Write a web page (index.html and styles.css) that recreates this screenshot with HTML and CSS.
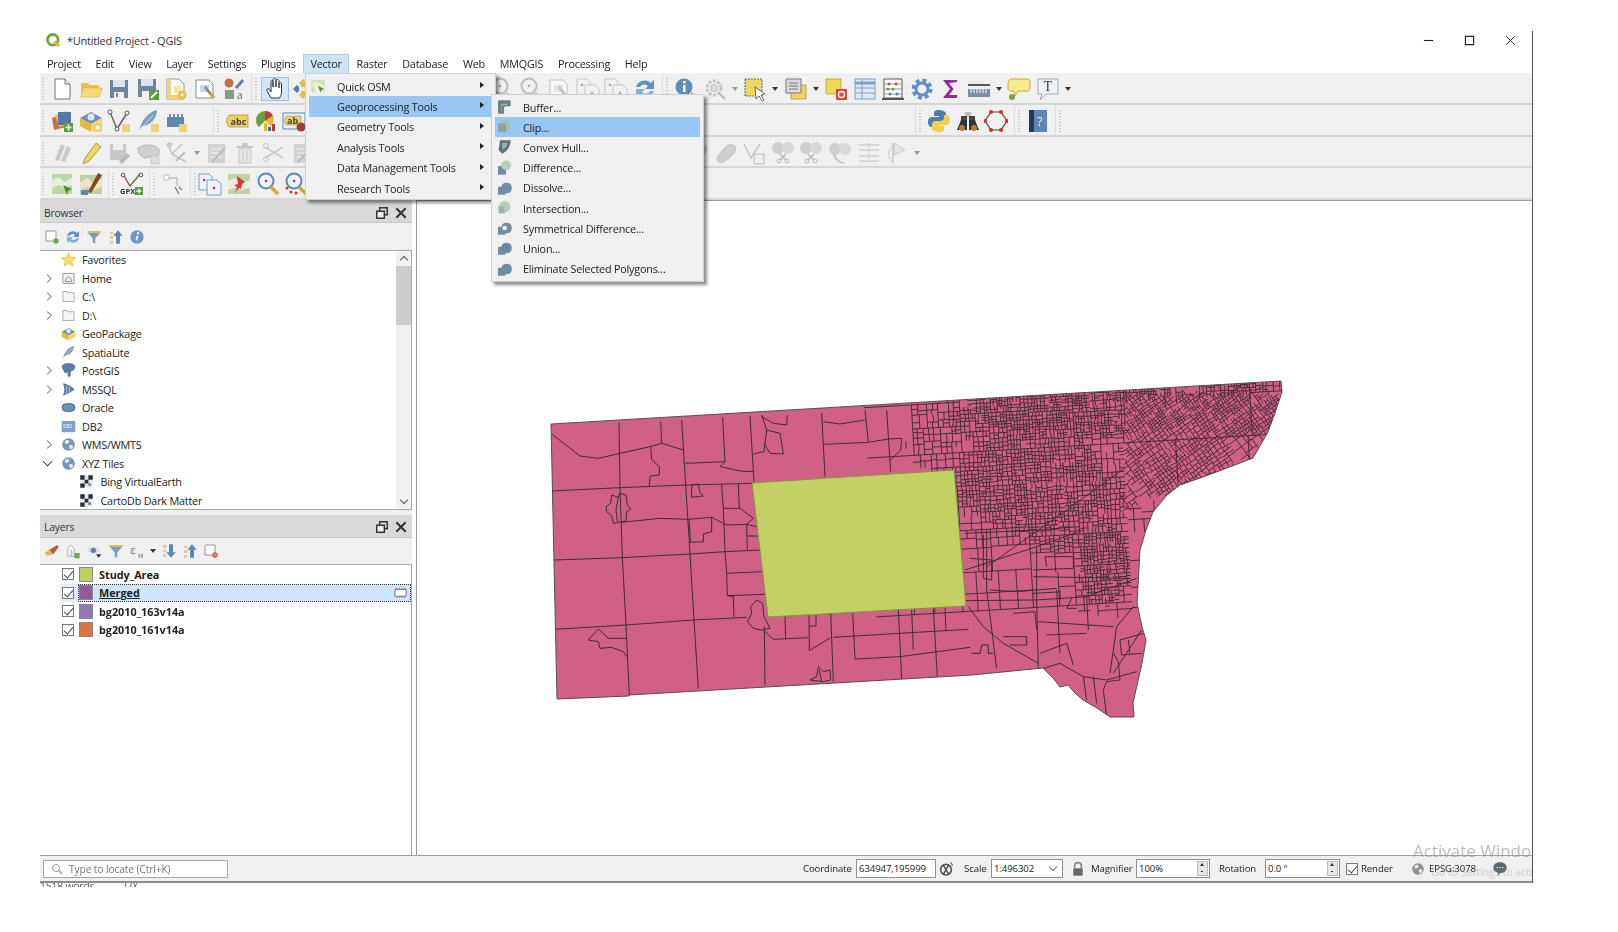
FILE: index.html
```html
<!DOCTYPE html>
<html lang="en">
<head>
    <meta charset="UTF-8">
    <title>*Untitled Project - QGIS</title>
    <link rel="stylesheet" href="styles.css">
</head>
<body>
    <!-- icon sheet -->
    <svg class="sheet" xmlns="http://www.w3.org/2000/svg">
        <symbol id="qgis" viewBox="0 0 24 24"><circle cx="11" cy="11" r="7.5" fill="none" stroke="#6ca53c" stroke-width="4"/><path d="M13 13l7 7" stroke="#e5b532" stroke-width="4"/></symbol>
        <symbol id="new" viewBox="0 0 24 24"><path d="M5 2h10l5 5v15H5z" fill="#fff" stroke="#777"/><path d="M15 2v5h5" fill="#eee" stroke="#777"/></symbol>
        <symbol id="open" viewBox="0 0 24 24"><path d="M2 20V6h7l2 2h9v12z" fill="#e9c04e"/><path d="M2 20l2-9h19l-3 9z" fill="#f8d978" stroke="#d9ae3e" stroke-width=".6"/></symbol>
        <symbol id="save" viewBox="0 0 24 24"><path d="M3 3h18v18H3z" fill="#6f859f"/><path d="M6 3h12v7H6z" fill="#dfe5ec"/><path d="M7 15h10v6H7z" fill="#f2f2f2"/><path d="M9 16h2v4H9z" fill="#6f859f"/></symbol>
        <symbol id="saveas" viewBox="0 0 24 24"><path d="M2 2h18v18H2z" fill="#6f859f"/><path d="M5 2h12v7H5z" fill="#dfe5ec"/><path d="M6 14h9v6H6z" fill="#f2f2f2"/><path d="M13 13h10v10H13z" fill="#5d9c3c"/><path d="M15 21l6-6" stroke="#fff" stroke-width="2"/></symbol>
        <symbol id="layout" viewBox="0 0 24 24"><path d="M3 2h12l5 5v15H3z" fill="#fff" stroke="#999"/><path d="M3 2h4v20H3zM3 18h17v4H3z" fill="#eed27a"/><path d="M10 9h7v7h-7z" fill="#f3e3a6"/><circle cx="18" cy="18" r="4.5" fill="#e8c14e"/><circle cx="18" cy="18" r="1.5" fill="#fff"/></symbol>
        <symbol id="layoutmgr" viewBox="0 0 24 24"><path d="M3 3h13l4 4v14H3z" fill="#fff" stroke="#888"/><path d="M7 8h9v7H7z" fill="#c7d8ea"/><path d="M11 11l8 10 2-2-8-10z" fill="#8a8a8a"/><path d="M16 17l4 5 2-2-3-4z" fill="#d8a534"/></symbol>
        <symbol id="style" viewBox="0 0 24 24"><circle cx="7" cy="6" r="4.5" fill="#c5703b"/><path d="M3 13h9v9H3z" fill="#83a27f"/><path d="M14 11l7-8" stroke="#5b7fa8" stroke-width="3"/><text x="15" y="22" class="svg-t" font-size="10" fill="#666">a</text></symbol>
        <symbol id="hand" viewBox="0 0 24 24"><path d="M8 21l-4-7c-1-2 1-3 2-2l2 3V5c0-2 2-2 2 0v5-7c0-2 3-2 3 0v7-6c0-2 3-2 3 0v7-4c0-2 2.500-2 2.500 0V15c0 3-1 4-2 6z" fill="#fff" stroke="#333"/></symbol>
        <symbol id="panmap" viewBox="0 0 24 24"><path d="M12 2l4 4-2 2v2h-4V8L8 6zM12 22l-4-4 2-2v-2h4v2l2 2z" fill="#e3bf3f"/><path d="M2 12l4-4 2 2v4l-2 2zM22 12l-4 4-2-2v-4l2-2z" fill="#4f7fb5"/></symbol>
        <symbol id="abc" viewBox="0 0 24 24"><path d="M4 6h19v12H4l-3-6z" fill="#edcf62" stroke="#a8914a" stroke-width=".7"/><text x="5.500" y="15.500" class="svg-t" font-size="9" font-weight="700" fill="#444">abc</text></symbol>
        <symbol id="pie" viewBox="0 0 24 24"><path d="M12 2a9 9 0 0 1 8 5l-8 5z" fill="#cb3a32"/><path d="M12 12V2a9 9 0 0 0-9 9c0 3 1 5 3 7z" fill="#6ea03c"/><path d="M12 12l8-5a9 9 0 0 1-2 10z" fill="#e5b737"/><path d="M11 14h3v8h-3z" fill="#e5b737"/><path d="M15 18h3v4h-3z" fill="#2f6fae"/><path d="M19 15h3v7h-3z" fill="#b8392f"/></symbol>
        <symbol id="labelbox" viewBox="0 0 24 24"><path d="M1 4h22v16H1z" fill="#eef4fb" stroke="#4b86c9"/><path d="M4 7h15v9H4l-2-4z" fill="#edcf62" stroke="#a8914a" stroke-width=".6"/><text x="5" y="15" class="svg-t" font-size="9" font-weight="700" fill="#444">ab</text><circle cx="19" cy="18" r="4.500" fill="#a23d3a"/></symbol>
        <symbol id="identify" viewBox="0 0 24 24"><circle cx="10" cy="10" r="8.500" fill="#5f8dbd"/><path d="M9 8h2.500v7H9zM9 4h2.500v2.500H9z" fill="#fff"/><path d="M14 14l9 5-4 1-1 4z" fill="#fff" stroke="#333" stroke-width=".6"/></symbol>
        <symbol id="gearoff" viewBox="0 0 24 24"><circle cx="11" cy="11" r="7" fill="none" stroke="#c3c3c3" stroke-width="3" stroke-dasharray="3 1.500"/><circle cx="11" cy="11" r="3.500" fill="#ddd" stroke="#bbb"/><path d="M16 16l6 6" stroke="#bbb" stroke-width="2"/></symbol>
        <symbol id="selectf" viewBox="0 0 24 24"><path d="M2 2h17v17H2z" fill="#efd664" stroke="#666" stroke-dasharray="2 1"/><path d="M12 10l10 7-4 1 3 5-2 1-3-5-3 3z" fill="#fff" stroke="#444" stroke-width=".8"/></symbol>
        <symbol id="selectt" viewBox="0 0 24 24"><path d="M7 8h15v14H7z" fill="#efd664" stroke="#a9953f" stroke-width=".8"/><path d="M2 2h15v14H2z" fill="#dcdcdc" stroke="#777"/><path d="M5 6h9M5 9h9M5 12h9" stroke="#777"/></symbol>
        <symbol id="deselect" viewBox="0 0 24 24"><path d="M2 2h15v15H2z" fill="#f0d758" stroke="#b59f3b" stroke-width=".8"/><path d="M12 12h11v11H12z" fill="#d54a3c"/><circle cx="17.500" cy="17.500" r="3" fill="none" stroke="#fff" stroke-width="1.300"/></symbol>
        <symbol id="table" viewBox="0 0 24 24"><path d="M2 2h20v20H2z" fill="#dfe9f5" stroke="#7e9fc4"/><path d="M2 6h20" stroke="#7e9fc4" stroke-width="3"/><path d="M9 3v19M2 11h20M2 16h20" stroke="#7e9fc4"/></symbol>
        <symbol id="abacus" viewBox="0 0 24 24"><path d="M3 2h18v19H3z" fill="#fff" stroke="#555"/><path d="M1 21h22v2H1z" fill="#555"/><path d="M3 7h18M3 12h18M3 17h18" stroke="#999"/><circle cx="8" cy="7" r="1.500" fill="#cc4a3d"/><circle cx="15" cy="7" r="1.500" fill="#cc4a3d"/><circle cx="7" cy="12" r="1.500" fill="#5d9c3c"/><circle cx="12" cy="12" r="1.500" fill="#5d9c3c"/><circle cx="9" cy="17" r="1.500" fill="#4f7fb5"/><circle cx="16" cy="17" r="1.500" fill="#4f7fb5"/></symbol>
        <symbol id="gearblue" viewBox="0 0 24 24"><circle cx="12" cy="12" r="8" fill="none" stroke="#5f8fc7" stroke-width="5" stroke-dasharray="3.600 2.700"/><circle cx="12" cy="12" r="6" fill="none" stroke="#5f8fc7" stroke-width="3"/></symbol>
        <symbol id="sigma" viewBox="0 0 24 24"><path d="M19 5V3H5l7 9-7 9h14v-3H11l4.500-6-4.500-6z" fill="#93279b"/></symbol>
        <symbol id="ruler" viewBox="0 0 24 24"><path d="M1 7h22v2H1z" fill="#555"/><path d="M1 12h22v8H1z" fill="#7f8fa3"/><path d="M4 12v4M7 12v4M10 12v4M13 12v4M16 12v4M19 12v4" stroke="#fff"/></symbol>
        <symbol id="tip" viewBox="0 0 24 24"><path d="M5 2h15c3 0 3 2 3 4v5c0 3-2 3-3 3H11l-3 5-1-5H5c-3 0-4-1-4-3V6c0-3 2-4 4-4z" fill="#f9ea8c" stroke="#c9a83b"/><circle cx="5" cy="20" r="3" fill="#7ca24f"/></symbol>
        <symbol id="tann" viewBox="0 0 24 24"><path d="M2 2h20v15H10l-6 6 2-6H2z" fill="#eef2f6" stroke="#a5adb7"/><text x="7.500" y="14" class="svg-t svg-serif" font-size="14" fill="#444">T</text></symbol>
        <symbol id="python" viewBox="0 0 24 24"><path d="M12 1c-5 0-5 2-5 4v2h5v1H5c-3 0-4 3-4 5s1 5 3 5h3v-3c0-2 2-3 4-3h5c2 0 3-2 3-3V5c0-2-3-4-7-4z" fill="#4a7eb0"/><path d="M12 23c5 0 5-2 5-4v-2h-5v-1h7c3 0 4-3 4-5s-1-5-3-5h-3v3c0 2-2 3-4 3H8c-2 0-3 2-3 3v5c0 2 3 3 7 3z" fill="#f3cf4f"/></symbol>
        <symbol id="binoc" viewBox="0 0 24 24"><path d="M9 3h6v5H9z" fill="#bbb"/><path d="M5 7h6v6H5zM13 7h6v6h-6z" fill="#444"/><path d="M1 21l4-10h6v10zM23 21l-4-10h-6v10z" fill="#333"/><circle cx="6" cy="19" r="3" fill="#c07a35"/><circle cx="18" cy="19" r="3" fill="#c07a35"/></symbol>
        <symbol id="hexa" viewBox="0 0 24 24"><path d="M7 3h10l6 9-6 9H7L1 12z" fill="none" stroke="#444" stroke-width="1.200"/><g fill="#e02b20"><circle cx="7" cy="3" r="2"/><circle cx="17" cy="3" r="2"/><circle cx="23" cy="12" r="2"/><circle cx="17" cy="21" r="2"/><circle cx="7" cy="21" r="2"/><circle cx="1" cy="12" r="2"/></g></symbol>
        <symbol id="helpbook" viewBox="0 0 24 24"><path d="M3 1h18v22H3z" fill="#5f85b5"/><path d="M3 1h5v22H3z" fill="#243a56"/><text x="11" y="17" class="svg-t" font-size="13" fill="#e8eef6">?</text></symbol>
        <symbol id="addlayers" viewBox="0 0 24 24"><path d="M2 9l12-4 2 13-12 3z" fill="#c8713c"/><path d="M5 6l12-4 3 13-11 3z" fill="#efc14e"/><path d="M8 3h13v13H8z" fill="#4f79ad"/><path d="M14 14h9v9h-9z" fill="#5d9c3c"/><path d="M18.500 15.500v6M15.500 18.500h6" stroke="#fff" stroke-width="1.600"/></symbol>
        <symbol id="gpkg" viewBox="0 0 24 24"><path d="M1 9l11-6 11 6-11 6z" fill="#6f8fb3"/><circle cx="12" cy="8" r="3.500" fill="#dfe8f2"/><path d="M1 9l11 6v8L1 17z" fill="#e4b93e"/><path d="M23 9l-11 6v8l11-6z" fill="#f5d66f"/></symbol>
        <symbol id="gpkgadd" viewBox="0 0 24 24"><use href="#gpkg"/><path d="M14 14h9v9h-9z" fill="#eed27a"/><circle cx="18.500" cy="18.500" r="2" fill="#fff"/></symbol>
        <symbol id="vect" viewBox="0 0 24 24"><path d="M3 3l7 17L20 4" fill="none" stroke="#666" stroke-width="1.500"/><circle cx="3" cy="3" r="2" fill="#fff" stroke="#555"/><circle cx="10" cy="20" r="2" fill="#fff" stroke="#555"/><circle cx="20" cy="4" r="2" fill="#fff" stroke="#555"/><path d="M15 15h8v8h-8z" fill="#eed27a"/></symbol>
        <symbol id="feather" viewBox="0 0 24 24"><path d="M3 22C5 12 12 3 21 1c0 7-5 13-10 15-3 1-5 1-6 2z" fill="#7f9dbf"/><path d="M3 22L17 6" stroke="#eef" stroke-width=".7"/></symbol>
        <symbol id="featheradd" viewBox="0 0 24 24"><use href="#feather"/><path d="M15 15h8v8h-8z" fill="#eed27a"/></symbol>
        <symbol id="chip" viewBox="0 0 24 24"><path d="M3 8h17v10H3z" fill="#5f86b5"/><path d="M6 5v3M10 5v3M14 5v3M18 5v3" stroke="#5f6f82" stroke-width="1.500"/><path d="M15 15h8v8h-8z" fill="#eed27a"/></symbol>
        <symbol id="memchip" viewBox="0 0 24 24"><path d="M3 7h18v11H3z" fill="#fff" stroke="#667" stroke-width="1.500"/><path d="M6 4v3M10 4v3M14 4v3M18 4v3M6 18v3M10 18v3M14 18v3M18 18v3" stroke="#667"/></symbol>
        <symbol id="pens" viewBox="0 0 24 24"><path d="M5 19L11 3l4 2-6 15zM11 20l6-15 4 2-6 14z" fill="#c9c9c9"/></symbol>
        <symbol id="pencil" viewBox="0 0 24 24"><path d="M6 17L17 2l5 4L10 20l-6 3z" fill="#f0d45c" stroke="#8d7a2a" stroke-width=".7"/></symbol>
        <symbol id="saveoff" viewBox="0 0 24 24"><path d="M3 3h16v16H3z" fill="#c8c8c8"/><path d="M6 3h10v6H6z" fill="#eee"/><path d="M12 20l8-8 3 3-8 8z" fill="#bbb"/></symbol>
        <symbol id="polyoff" viewBox="0 0 24 24"><path d="M2 7c4-4 16-4 20 0s0 9-4 9-5 0-8 1-9-5-8-10z" fill="#cfcfcf" stroke="#bbb"/><path d="M15 15h8v8h-8z" fill="#ddd" stroke="#bbb" stroke-width=".6"/></symbol>
        <symbol id="vertexoff" viewBox="0 0 24 24"><path d="M4 3h5M4 3l4 10 10-10M8 13l14 8" fill="none" stroke="#c5c5c5" stroke-width="1.500"/><circle cx="5" cy="4" r="2" fill="none" stroke="#bbb"/><path d="M12 20l9-9" stroke="#bbb" stroke-width="2"/></symbol>
        <symbol id="formoff" viewBox="0 0 24 24"><path d="M3 3h17v19H3z" fill="#d2d2d2"/><path d="M6 8h11M6 12h11M6 16h11" stroke="#f2f2f2"/><path d="M7 21l13-14" stroke="#bbb" stroke-width="2"/></symbol>
        <symbol id="trashoff" viewBox="0 0 24 24"><path d="M4 5h16v2H4zM9 2h6v3H9z" fill="#c6c6c6"/><path d="M6 8h12v14H6z" fill="#e7e7e7" stroke="#c6c6c6"/><path d="M10 10v10M14 10v10" stroke="#c6c6c6"/></symbol>
        <symbol id="scissoff" viewBox="0 0 24 24"><path d="M3 6l18 11M3 17L21 6" stroke="#cacaca" stroke-width="1.800"/><circle cx="4" cy="5" r="2.500" fill="none" stroke="#c5c5c5"/><circle cx="4" cy="18" r="2.500" fill="none" stroke="#c5c5c5"/></symbol>
        <symbol id="blobsoff" viewBox="0 0 24 24"><path d="M3 18c0-4 3-5 6-9s6-6 10-5 3 6 0 9-5 5-8 7-8 2-8-2z" fill="#cfcfcf" stroke="#bbb"/></symbol>
        <symbol id="vboxoff" viewBox="0 0 24 24"><path d="M2 3l7 14L18 3" fill="none" stroke="#c8c8c8" stroke-width="1.500"/><path d="M12 13h10v10H12z" fill="#eee" stroke="#bbb"/></symbol>
        <symbol id="splitoff" viewBox="0 0 24 24"><circle cx="7" cy="7" r="6" fill="#cfcfcf"/><circle cx="17" cy="7" r="6" fill="#d8d8d8"/><path d="M9 13l6 6M15 13l-6 6" stroke="#bbb" stroke-width="1.600"/><circle cx="8" cy="20" r="2" fill="none" stroke="#bbb"/><circle cx="16" cy="20" r="2" fill="none" stroke="#bbb"/></symbol>
        <symbol id="reshapeoff" viewBox="0 0 24 24"><circle cx="7" cy="8" r="6" fill="#cfcfcf"/><circle cx="17" cy="8" r="6" fill="#d8d8d8"/><path d="M6 13c1 6 7 9 10 9" fill="none" stroke="#bbb" stroke-width="1.500"/></symbol>
        <symbol id="offsetoff" viewBox="0 0 24 24"><path d="M2 4h20M2 9h20M2 15h20M2 20h20" stroke="#d0d0d0" stroke-width="1.500"/><path d="M12 2v20" stroke="#c0c0c0" stroke-dasharray="2 1.500"/></symbol>
        <symbol id="rotateoff" viewBox="0 0 24 24"><path d="M8 2v20" stroke="#c8c8c8" stroke-width="1.500"/><path d="M9 2l11 7-11 5z" fill="#e6e6e6" stroke="#c8c8c8"/><path d="M8 4C3 8 2 17 7 21" fill="none" stroke="#c8c8c8"/></symbol>
        <symbol id="mapgreen" viewBox="0 0 24 24"><path d="M2 2h20v20H2z" fill="#bcd6a6"/><path d="M2 8l7-3 6 5 7-4v7l-8 3-5-3-7 3z" fill="#e8efdc"/><path d="M13 13l9 4-4 2-1 4z" fill="#4f8a30"/></symbol>
        <symbol id="mappen" viewBox="0 0 24 24"><path d="M1 3h22v19H1z" fill="#b9d3a0"/><path d="M1 10l8-4 5 5 9-4v8l-9 3-5-3-8 3z" fill="#f0e2c5"/><path d="M9 20L19 1l4 2-11 18z" fill="#7a4a2a"/><path d="M2 18h7v5H2z" fill="#5f86b5"/></symbol>
        <symbol id="gpx" viewBox="0 0 24 24"><path d="M3 2l7 12L20 2" fill="none" stroke="#a34a3e" stroke-width="1.300"/><path d="M10 14L20 2" stroke="#5d9c3c" stroke-width="1.300"/><circle cx="3" cy="3" r="1.800" fill="#fff" stroke="#555"/><circle cx="21" cy="3" r="1.800" fill="#fff" stroke="#555"/><text x="0" y="22" class="svg-t" font-size="7.500" font-weight="700" fill="#333">GPX</text><path d="M15 15h8v8h-8z" fill="#5d9c3c"/><path d="M19 16.500v5M16.500 19h5" stroke="#fff" stroke-width="1.300"/></symbol>
        <symbol id="cornersel" viewBox="0 0 24 24"><path d="M3 6h13v8" fill="none" stroke="#bdbdbd" stroke-width="1.300"/><path d="M3 3h5v5H3z" fill="#fff" stroke="#bbb"/><path d="M14 15l4 7M18 15l3 3" stroke="#777" stroke-width="1.200"/></symbol>
        <symbol id="docpins" viewBox="0 0 24 24"><path d="M1 2h10l3 3v13H1z" fill="#eef3f9" stroke="#7d9bbd"/><path d="M9 8h10l4 4v11H9z" fill="#eef3f9" stroke="#7d9bbd"/><circle cx="6" cy="8" r="1.300" fill="#d33"/><circle cx="16" cy="16" r="1.300" fill="#d33"/></symbol>
        <symbol id="mappin" viewBox="0 0 24 24"><path d="M1 2h22v20H1z" fill="#bcd6a6"/><path d="M1 9l7-3 7 5 8-3v8l-9 2-5-3-8 3z" fill="#eef0dc"/><path d="M10 4l8 6-3 2-1 5-2-1-4 5 2-6-3-2 4-1z" fill="#d43a2f"/></symbol>
        <symbol id="zoomone" viewBox="0 0 24 24"><circle cx="10" cy="9" r="7.500" fill="#eaf2fa" stroke="#5f86b5" stroke-width="2"/><circle cx="10" cy="9" r="1.300" fill="#d33"/><path d="M15 15l7 7" stroke="#d7a53b" stroke-width="3.500"/></symbol>
        <symbol id="zoommany" viewBox="0 0 24 24"><use href="#zoomone"/><circle cx="7" cy="20" r="1.500" fill="#d33"/><circle cx="3" cy="16" r="1.500" fill="#d33"/><circle cx="12" cy="21" r="1.500" fill="#d33"/></symbol>
        <symbol id="m-osm" viewBox="0 0 24 24"><path d="M2 3h20v18H2z" fill="#cfe0bd"/><path d="M2 8l8-3 12 7-5 9H9z" fill="#e9efdd"/><path d="M12 12l9 4-4 2-1 4z" fill="#5a8a3a"/></symbol>
        <symbol id="m-buffer" viewBox="0 0 24 24"><path d="M3 4c0-1 1-2 2-2h15c1 0 2 1 2 2v7h-7c-2 0-3 1-3 3v8H5c-1 0-2-1-2-2z" fill="#6e7f82"/><path d="M8 7h9v2h-5c-2 0-3 1-3 3v7H8z" fill="#a3b1b3"/></symbol>
        <symbol id="m-clip" viewBox="0 0 24 24"><circle cx="13" cy="10" r="8" fill="#a9bfa8" stroke="#8fa78f" stroke-dasharray="2 1.500"/><path d="M3 7h12v13H3z" fill="#7f9bab" opacity=".8"/></symbol>
        <symbol id="m-hull" viewBox="0 0 24 24"><path d="M6 2h16c0 8-5 17-13 20L4 16z" fill="#5f7377"/><path d="M9 6h8c0 4-3 8-7 10z" fill="#9fb1b4"/></symbol>
        <symbol id="m-diff" viewBox="0 0 24 24"><path d="M3 9h12v13H3z" fill="#6f8ea5"/><circle cx="15" cy="8" r="7" fill="#b9ccb8" stroke="#a3bba3" stroke-dasharray="2 1.500"/></symbol>
        <symbol id="m-dissolve" viewBox="0 0 24 24"><path d="M3 10h5a8 8 0 1 1 9 10h-3v2H3z" fill="#6f8ea5"/></symbol>
        <symbol id="m-inter" viewBox="0 0 24 24"><circle cx="13" cy="10" r="8" fill="#b9ccb8" stroke="#a3bba3" stroke-dasharray="2 1.500"/><path d="M4 9h9v11H4z" fill="#9db4b4" stroke="#b9ccb8" stroke-dasharray="1.500 1"/></symbol>
        <symbol id="m-sym" viewBox="0 0 24 24"><path d="M3 10h5a8 8 0 1 1 9 10h-3v2H3z" fill="#6f8ea5"/><circle cx="13" cy="12" r="3.500" fill="#e8eef2"/></symbol>
        <symbol id="m-union" viewBox="0 0 24 24"><path d="M3 10h5a8 8 0 1 1 9 10h-3v2H3z" fill="#6f8ea5"/><circle cx="13" cy="12" r="4" fill="none" stroke="#4d6b80"/></symbol>
        <symbol id="star" viewBox="0 0 24 24"><path d="M12 1l3.300 7.500 8 .8-6 5.400 1.800 8L12 18.500 4.900 22.700l1.800-8-6-5.400 8-.8z" fill="#f6df62" stroke="#c9a83b" stroke-width=".8"/></symbol>
        <symbol id="homef" viewBox="0 0 24 24"><path d="M3 4h18v16H3z" fill="#f3f3f3" stroke="#888" stroke-width="1.300"/><path d="M7 13l5-4 5 4v4H7z" fill="none" stroke="#777" stroke-width="1.300"/></symbol>
        <symbol id="folder" viewBox="0 0 24 24"><path d="M3 4h7l1 2h10v14H3z" fill="#f5f5f5" stroke="#999" stroke-width="1.200"/></symbol>
        <symbol id="pg" viewBox="0 0 24 24"><path d="M3 3c3-3 15-3 18 0s0 8-2 9-3 1-4 1v7c0 2-4 2-4 0v-7c-2 4-5 3-6 1s0-2-1-3-4-5-1-8z" fill="#5f7ea5" stroke="#3f5a7c" stroke-width=".7"/></symbol>
        <symbol id="mssql" viewBox="0 0 24 24"><path d="M3 2c7 1 14 5 19 10-5 4-12 8-19 10 3-7 3-13 0-20z" fill="#5f7ea5"/><path d="M8 6c2 4 2 9 0 13M13 8c1 3 1 6 0 9" stroke="#dfe7f0" fill="none"/></symbol>
        <symbol id="oracle" viewBox="0 0 24 24"><rect x="2" y="6" width="20" height="12" rx="6" fill="#6f8fbb" stroke="#3f5a7c" stroke-width="1.500"/></symbol>
        <symbol id="db2" viewBox="0 0 24 24"><rect x="1" y="3" width="22" height="18" rx="2" fill="#7d9fcb"/><text x="3" y="15" class="svg-t" font-size="7.500" fill="#fff">DB2</text></symbol>
        <symbol id="globe" viewBox="0 0 24 24"><circle cx="12" cy="12" r="10" fill="#7795b5"/><path d="M7 6c3-2 5-1 6 1s-2 3-4 4-4-3-2-5zM14 13c3-1 6 0 5 3s-3 4-4 3-3-5-1-6z" fill="#e9eef3"/></symbol>
        <symbol id="tiles" viewBox="0 0 24 24"><path d="M2 2h20v20H2z" fill="#e8e8e8"/><path d="M2 2h7v7H2zM15 2h7v7h-7zM9 9h6v6H9zM2 15h7v7H2z" fill="#25303c"/><path d="M15 15h4v4h-4z" fill="#6d7c8c"/></symbol>
        <symbol id="addsel" viewBox="0 0 24 24"><path d="M3 3h15v15H3z" fill="#fff" stroke="#888" stroke-width="1.300"/><circle cx="18" cy="18" r="4" fill="#6aa84a"/></symbol>
        <symbol id="refresh" viewBox="0 0 24 24"><path d="M3 10a9 9 0 0 1 15-4l3-3v9h-9l3-3a5 5 0 0 0-8 1z" fill="#5d91c8"/><path d="M21 14a9 9 0 0 1-15 4l-3 3v-9h9l-3 3a5 5 0 0 0 8-1z" fill="#7fb0de"/></symbol>
        <symbol id="filter" viewBox="0 0 24 24"><path d="M2 3h20v3H2z" fill="#e0c04f"/><path d="M3 6h18l-7 8v8l-4-2v-6z" fill="#7c9cc2"/></symbol>
        <symbol id="collapse" viewBox="0 0 24 24"><path d="M3 4h5v4H3zM3 11h5v4H3zM3 18h5v4H3z" fill="#e3c9a0"/><path d="M15 2l7 8h-4v12h-6V10H8z" fill="#5f86b5"/></symbol>
        <symbol id="expand" viewBox="0 0 24 24"><path d="M3 3h5v4H3zM3 10h5v4H3zM3 17h5v4H3z" fill="#e3c9a0"/><path d="M15 22l7-8h-4V2h-6v12H8z" fill="#5f86b5"/></symbol>
        <symbol id="info" viewBox="0 0 24 24"><circle cx="12" cy="12" r="10" fill="#6f97c9"/><path d="M11 10h3l-1.500 7H10zM12 5h3v3h-3z" fill="#fff"/></symbol>
        <symbol id="brush" viewBox="0 0 24 24"><path d="M1 15l7-5 6 7-9 2z" fill="#e6b54a"/><path d="M8 10l12-7 2 3-8 11z" fill="#c0563f"/></symbol>
        <symbol id="addgroup" viewBox="0 0 24 24"><path d="M4 20V8l5-5 5 5v12z" fill="#f4f4f4" stroke="#999"/><path d="M8 20V10h3v10z" fill="#ccc"/><path d="M14 15h8v8h-8z" fill="#6aa84a"/></symbol>
        <symbol id="eye" viewBox="0 0 24 24"><path d="M1 11c5-7 15-7 20 0-5 7-15 7-20 0z" fill="#ddd"/><circle cx="11" cy="11" r="4" fill="#5f7ea5"/><path d="M15 17h8l-4 5z" fill="#333"/></symbol>
        <symbol id="epsi" viewBox="0 0 24 24"><text x="2" y="16" class="svg-t" font-size="17" fill="#777">ε</text><path d="M14 16h3v6h-3zM18 16h3v6h-3z" fill="#aaa"/></symbol>
        <symbol id="removesel" viewBox="0 0 24 24"><path d="M3 3h15v15H3z" fill="#fff" stroke="#888" stroke-width="1.300"/><circle cx="18" cy="18" r="4" fill="#d9534f"/><path d="M16 18h4" stroke="#fff"/></symbol>
        <symbol id="float" viewBox="0 0 24 24"><path d="M8 3h13v12H8z" fill="none" stroke="#333" stroke-width="2.500"/><path d="M3 9h13v12H3z" fill="#f0f0f0" stroke="#333" stroke-width="2.500"/></symbol>
        <symbol id="close" viewBox="0 0 24 24"><path d="M4 4l16 16M20 4L4 20" stroke="#333" stroke-width="3.500"/></symbol>
        <symbol id="search" viewBox="0 0 24 24"><circle cx="10" cy="10" r="7" fill="none" stroke="#999" stroke-width="2"/><path d="M15 15l7 7" stroke="#999" stroke-width="2.500"/></symbol>
        <symbol id="crs" viewBox="0 0 24 24"><circle cx="12" cy="13" r="8" fill="none" stroke="#555" stroke-width="2.500"/><path d="M8 6l8 14M16 6L8 20" stroke="#444" stroke-width="2"/><path d="M19 2l3 5" stroke="#777" stroke-width="2"/></symbol>
        <symbol id="lock" viewBox="0 0 24 24"><path d="M7 11V7c0-6 10-6 10 0v4" fill="none" stroke="#888" stroke-width="2.500"/><path d="M5 11h14v11H5z" fill="#666"/></symbol>
        <symbol id="msg" viewBox="0 0 24 24"><path d="M12 2c6 0 10 3 10 8s-4 8-10 8l-2 4-2-5c-4-1-6-4-6-7 0-5 4-8 10-8z" fill="#5a6b70"/><path d="M7 10h2M11 10h2M15 10h2" stroke="#fff" stroke-width="1.500"/></symbol>
    </svg>

    <div class="window">
        <div class="titlebar">
            <svg class="title-icon"><use href="#qgis"/></svg>
            <span class="title-text">*Untitled Project - QGIS</span>
            <div class="win-controls">
                <span class="win-btn"><svg viewBox="0 0 12 12"><path d="M1 6h10" stroke="#222" stroke-width="1.200"/></svg></span>
                <span class="win-btn"><svg viewBox="0 0 12 12"><path d="M1.500 1.500h9v9h-9z" fill="none" stroke="#222" stroke-width="1.200"/></svg></span>
                <span class="win-btn"><svg viewBox="0 0 12 12"><path d="M1.500 1.500l9 9M10.500 1.500l-9 9" stroke="#222"/></svg></span>
            </div>
        </div>

        <div class="menubar">
            <span class="menu-item">Project</span>
            <span class="menu-item">Edit</span>
            <span class="menu-item">View</span>
            <span class="menu-item">Layer</span>
            <span class="menu-item">Settings</span>
            <span class="menu-item">Plugins</span>
            <span class="menu-item active">Vector</span>
            <span class="menu-item">Raster</span>
            <span class="menu-item">Database</span>
            <span class="menu-item">Web</span>
            <span class="menu-item">MMQGIS</span>
            <span class="menu-item">Processing</span>
            <span class="menu-item">Help</span>
        </div>

        <div class="toolbar">
            <span class="grip first"></span>
            <svg class="ic"><use href="#new"/></svg>
            <svg class="ic"><use href="#open"/></svg>
            <svg class="ic"><use href="#save"/></svg>
            <svg class="ic"><use href="#saveas"/></svg>
            <svg class="ic"><use href="#layout"/></svg>
            <svg class="ic"><use href="#layoutmgr"/></svg>
            <svg class="ic"><use href="#style"/></svg>
            <span class="sep"></span><span class="grip"></span>
            <span class="ic-on"><svg class="ic"><use href="#hand"/></svg></span>
            <svg class="ic"><use href="#panmap"/></svg>
            <span class="gap gap-r1"></span>
            <svg class="ic off"><use href="#zoomone"/></svg>
            <svg class="ic off"><use href="#zoomone"/></svg>
            <svg class="ic off"><use href="#layoutmgr"/></svg>
            <svg class="ic off"><use href="#docpins"/></svg>
            <svg class="ic off"><use href="#docpins"/></svg>
            <svg class="ic"><use href="#refresh"/></svg>
            <span class="sep"></span><span class="grip"></span>
            <svg class="ic"><use href="#identify"/></svg>
            <svg class="ic"><use href="#gearoff"/></svg><span class="drop off"></span>
            <svg class="ic"><use href="#selectf"/></svg><span class="drop"></span>
            <svg class="ic"><use href="#selectt"/></svg><span class="drop"></span>
            <svg class="ic"><use href="#deselect"/></svg>
            <svg class="ic"><use href="#table"/></svg>
            <svg class="ic"><use href="#abacus"/></svg>
            <svg class="ic"><use href="#gearblue"/></svg>
            <svg class="ic"><use href="#sigma"/></svg>
            <svg class="ic"><use href="#ruler"/></svg><span class="drop"></span>
            <svg class="ic"><use href="#tip"/></svg>
            <svg class="ic"><use href="#tann"/></svg><span class="drop"></span>
        </div>

        <div class="toolbar">
            <span class="grip first"></span>
            <svg class="ic"><use href="#addlayers"/></svg>
            <svg class="ic"><use href="#gpkgadd"/></svg>
            <svg class="ic"><use href="#vect"/></svg>
            <svg class="ic"><use href="#featheradd"/></svg>
            <svg class="ic"><use href="#chip"/></svg>
            <span class="gap gap-r2a"></span>
            <span class="sep"></span><span class="grip"></span>
            <svg class="ic"><use href="#abc"/></svg>
            <svg class="ic"><use href="#pie"/></svg>
            <svg class="ic"><use href="#labelbox"/></svg>
            <span class="gap gap-r2b"></span>
            <span class="sep"></span><span class="grip"></span>
            <svg class="ic"><use href="#python"/></svg>
            <svg class="ic"><use href="#binoc"/></svg>
            <svg class="ic"><use href="#hexa"/></svg>
            <span class="sep"></span><span class="grip"></span>
            <svg class="ic"><use href="#helpbook"/></svg>
            <span class="sep"></span><span class="grip"></span>
        </div>

        <div class="toolbar short">
            <span class="grip first"></span>
            <svg class="ic"><use href="#pens"/></svg>
            <svg class="ic"><use href="#pencil"/></svg>
            <svg class="ic"><use href="#saveoff"/></svg>
            <svg class="ic"><use href="#polyoff"/></svg>
            <svg class="ic"><use href="#vertexoff"/></svg><span class="drop off"></span>
            <svg class="ic"><use href="#formoff"/></svg>
            <svg class="ic"><use href="#trashoff"/></svg>
            <svg class="ic"><use href="#scissoff"/></svg>
            <svg class="ic"><use href="#formoff"/></svg>
            <span class="gap gap-r3"></span>
            <svg class="ic"><use href="#blobsoff"/></svg>
            <svg class="ic"><use href="#blobsoff"/></svg>
            <svg class="ic"><use href="#vboxoff"/></svg>
            <svg class="ic"><use href="#splitoff"/></svg>
            <svg class="ic"><use href="#splitoff"/></svg>
            <svg class="ic"><use href="#reshapeoff"/></svg>
            <svg class="ic"><use href="#offsetoff"/></svg>
            <svg class="ic"><use href="#rotateoff"/></svg><span class="drop off"></span>
        </div>

        <div class="toolbar">
            <span class="grip first"></span>
            <svg class="ic"><use href="#mapgreen"/></svg>
            <svg class="ic"><use href="#mappen"/></svg>
            <span class="sep"></span><span class="grip"></span>
            <svg class="ic"><use href="#gpx"/></svg>
            <span class="sep"></span><span class="grip"></span>
            <svg class="ic"><use href="#cornersel"/></svg>
            <span class="sep"></span><span class="grip tight"></span>
            <svg class="ic"><use href="#docpins"/></svg>
            <svg class="ic"><use href="#mappin"/></svg>
            <svg class="ic"><use href="#zoomone"/></svg>
            <svg class="ic"><use href="#zoommany"/></svg>
        </div>

        <div class="main">
            <div class="docks">
                <section class="dock browser">
                    <div class="dock-title">
                        <span>Browser</span>
                        <svg class="dock-btn"><use href="#float"/></svg>
                        <svg class="dock-btn"><use href="#close"/></svg>
                    </div>
                    <div class="dock-tools">
                        <svg class="tool"><use href="#addsel"/></svg>
                        <svg class="tool"><use href="#refresh"/></svg>
                        <svg class="tool"><use href="#filter"/></svg>
                        <svg class="tool"><use href="#collapse"/></svg>
                        <svg class="tool"><use href="#info"/></svg>
                    </div>
                    <div class="tree">
                        <ul class="tree-rows">
                            <li><i class="twisty"></i><svg class="node"><use href="#star"/></svg>Favorites</li>
                            <li><i class="twisty shut"></i><svg class="node"><use href="#homef"/></svg>Home</li>
                            <li><i class="twisty shut"></i><svg class="node"><use href="#folder"/></svg>C:\</li>
                            <li><i class="twisty shut"></i><svg class="node"><use href="#folder"/></svg>D:\</li>
                            <li><i class="twisty"></i><svg class="node"><use href="#gpkg"/></svg>GeoPackage</li>
                            <li><i class="twisty"></i><svg class="node"><use href="#feather"/></svg>SpatiaLite</li>
                            <li><i class="twisty shut"></i><svg class="node"><use href="#pg"/></svg>PostGIS</li>
                            <li><i class="twisty shut"></i><svg class="node"><use href="#mssql"/></svg>MSSQL</li>
                            <li><i class="twisty"></i><svg class="node"><use href="#oracle"/></svg>Oracle</li>
                            <li><i class="twisty"></i><svg class="node"><use href="#db2"/></svg>DB2</li>
                            <li><i class="twisty shut"></i><svg class="node"><use href="#globe"/></svg>WMS/WMTS</li>
                            <li><i class="twisty open"></i><svg class="node"><use href="#globe"/></svg>XYZ Tiles</li>
                            <li class="child"><svg class="node"><use href="#tiles"/></svg>Bing VirtualEarth</li>
                            <li class="child"><svg class="node"><use href="#tiles"/></svg>CartoDb Dark Matter</li>
                        </ul>
                        <div class="scrollbar">
                            <i class="sb-arrow up"></i>
                            <div class="sb-track"><div class="sb-thumb"></div></div>
                            <i class="sb-arrow down"></i>
                        </div>
                    </div>
                </section>

                <section class="dock layers">
                    <div class="dock-title">
                        <span>Layers</span>
                        <svg class="dock-btn"><use href="#float"/></svg>
                        <svg class="dock-btn"><use href="#close"/></svg>
                    </div>
                    <div class="dock-tools">
                        <svg class="tool"><use href="#brush"/></svg>
                        <svg class="tool"><use href="#addgroup"/></svg>
                        <svg class="tool"><use href="#eye"/></svg>
                        <svg class="tool"><use href="#filter"/></svg>
                        <svg class="tool"><use href="#epsi"/></svg><span class="drop small"></span>
                        <svg class="tool"><use href="#expand"/></svg>
                        <svg class="tool"><use href="#collapse"/></svg>
                        <svg class="tool"><use href="#removesel"/></svg>
                    </div>
                    <ul class="layer-list">
                        <li><i class="check"></i><i class="swatch study"></i>Study_Area</li>
                        <li class="current"><i class="check"></i><span class="cur-box"><i class="swatch merged"></i><u>Merged</u><svg class="mem"><use href="#memchip"/></svg></span></li>
                        <li><i class="check"></i><i class="swatch bg163"></i>bg2010_163v14a</li>
                        <li><i class="check"></i><i class="swatch bg161"></i>bg2010_161v14a</li>
                    </ul>
                </section>
            </div>

            <div class="canvas">
                <svg id="map" viewBox="417 201 1114.5 654">
                    <defs>
                        <path id="outline" d="M551 424L1281 381 1282 392 1275 413 1268 432 1253 458 1227 468 1203 477 1180 485 1167 495 1153 512 1146 530 1140 550 1137 603 1142 627 1146 640 1142 663 1133 703 1134 717 1110 717 1097 708 1083 700 1075 693 1068 685 1060 687 1053 678 1043 668 972 675 629 695 629 696 557 699z"/>
                        <clipPath id="county"><use href="#outline"/></clipPath>
                    </defs>
                    <use href="#outline" class="county"/>
                    <g clip-path="url(#county)">
                        <!-- coordinates below are in 3x crop space, so the scale groups -->
                        <g id="tracts-generated"></g>
                        <g class="tracts" transform="translate(540 410) scale(.33333)">
                            <path d="M237 38L240 230 247 440 258 645 268 855M425 30L437 225 450 430 462 630 475 835M36 243L240 233 440 225 640 220M43 450L247 443 450 432 555 425 665 420M43 658L258 645 460 630 620 622"/>
                            <path d="M35 72L120 138 175 145 240 130 330 110 365 100 430 120M362 35L365 100M332 110L335 148 358 170 358 195 330 198 328 230M548 22L555 155 437 160M630 18L642 215M555 155L540 170 600 183 640 185"/>
                            <path d="M665 15L680 60 672 125 640 132M665 20L700 40 740 45 742 15M680 60L720 70 730 132 690 130 672 100M845 10L855 200M850 35L900 42 975 30M975 0L985 95M853 103L985 97 1045 87 1085 85M1040 0L1052 185M1085 85L1082 120 1052 150"/>
                            <path d="M545 225L550 295 555 425 560 490 562 557 580 560 582 622M560 490L665 485M562 557L675 553M595 222L598 295M550 295L600 295 640 325 620 343M245 337L360 325 445 328 515 322 560 345 620 343 650 350M447 328L452 397 490 395 490 372 515 365 515 322M620 343L622 420M622 378L652 378"/>
                            <path d="M215 255L235 262 238 250 258 255 262 285 272 297 260 305 258 333 220 340 215 318 200 305 198 290 212 280zM235 262L228 300 232 335M455 225L475 222 480 248 490 258 455 262z"/>
                            <path d="M145 690L175 657 205 685 240 685 258 685M145 690L175 695 180 715 215 712 250 725 260 740"/>
                            <path d="M673 650L675 825M670 660L700 688 805 683M735 618L737 688M807 615L808 722 872 683M872 610L880 815M828 615L828 648 808 648M880 682L1078 670 1285 658M938 610L945 747 1080 740 1290 712M1075 600L1085 808M1115 600L1120 720M1180 595L1192 800M1215 592L1218 663"/>
                            <path d="M632 590L650 570 668 580 672 620 690 655 665 660 640 655 622 635 635 610zM810 810L830 800 835 770 850 785 870 780 872 810 850 815zM838 780L845 815"/>
                        </g>
                        <g class="tracts" transform="translate(940 370) scale(.33333)">
                            <path d="M75 692L290 690 440 680 590 625M140 480L140 660 170 895M290 530L290 690 295 895M85 710L130 770 190 820 295 880M75 600L290 530 430 480M150 660L230 665 350 655M220 730L285 725 290 780M75 490L290 480 420 470M130 495L130 625 155 630 155 570 90 565"/>
                            <path d="M440 680L445 780M350 660L360 850M295 755L520 770M320 795L440 790M300 850L380 820 400 885M190 800L260 800 260 825 210 825M95 850L120 850 125 825 145 825 145 850 160 850M520 910L605 780M580 710L530 770 510 910M540 810L610 790M540 810L545 855 605 850M565 810L570 850M520 850L535 875 540 930 500 935 490 960 500 1040M430 920L440 990M460 920L470 1000M310 895L360 880 430 920 500 930 590 905M280 600L400 595 400 560 315 560 320 590M280 620L560 625M360 690L360 660M395 685L380 715 410 715"/>
                        </g>
                    </g>
                    <use href="#outline" class="county-edge"/>
                    <path class="study" d="M752 483L954 470 966 606 768 617z"/>
                </svg>
            </div>
        </div>

        <div class="statusbar">
            <div class="locator"><svg class="loc-icon"><use href="#search"/></svg>Type to locate (Ctrl+K)</div>
            <span class="st-label l-coord">Coordinate</span>
            <span class="st-input w-coord">634947,195999</span>
            <svg class="st-icon"><use href="#crs"/></svg>
            <span class="st-label l-scale">Scale</span>
            <span class="st-input w-scale">1:496302<i class="combo"></i></span>
            <svg class="st-icon st-lock"><use href="#lock"/></svg>
            <span class="st-label l-mag">Magnifier</span>
            <span class="st-input w-mag">100%<i class="spin"></i></span>
            <span class="st-label l-rot">Rotation</span>
            <span class="st-input w-rot">0.0 °<i class="spin"></i></span>
            <i class="check st-check"></i>
            <span class="st-label l-render">Render</span>
            <svg class="st-icon st-globe"><use href="#globe"/></svg>
            <span class="st-label l-epsg">EPSG:3078</span>
            <svg class="st-icon st-msg"><use href="#msg"/></svg>
        </div>
        <div class="behind"><span>1518 words</span><span class="lix">LIX</span></div>

        <!-- open menus and the watermark lie over the window -->
        <div class="watermark">
            <div class="wm-big">Activate Windows</div>
            <div class="wm-small">Go to Settings to activate</div>
        </div>

        <ul class="menu vector-menu">
            <li><svg class="menu-ic"><use href="#m-osm"/></svg>Quick OSM<i class="sub"></i></li>
            <li class="hot">Geoprocessing Tools<i class="sub"></i></li>
            <li>Geometry Tools<i class="sub"></i></li>
            <li>Analysis Tools<i class="sub"></i></li>
            <li>Data Management Tools<i class="sub"></i></li>
            <li>Research Tools<i class="sub"></i></li>
        </ul>
        <ul class="menu geo-menu">
            <li><svg class="menu-ic"><use href="#m-buffer"/></svg>Buffer...</li>
            <li class="hot"><svg class="menu-ic"><use href="#m-clip"/></svg>Clip...</li>
            <li><svg class="menu-ic"><use href="#m-hull"/></svg>Convex Hull...</li>
            <li><svg class="menu-ic"><use href="#m-diff"/></svg>Difference...</li>
            <li><svg class="menu-ic"><use href="#m-dissolve"/></svg>Dissolve...</li>
            <li><svg class="menu-ic"><use href="#m-inter"/></svg>Intersection...</li>
            <li><svg class="menu-ic"><use href="#m-sym"/></svg>Symmetrical Difference...</li>
            <li><svg class="menu-ic"><use href="#m-union"/></svg>Union...</li>
            <li><svg class="menu-ic"><use href="#m-dissolve"/></svg>Eliminate Selected Polygons...</li>
        </ul>
    </div>

    <script src="map.js"></script>
</body>
</html>
```

FILE: styles.css
```css
*{
    box-sizing: border-box;
}
html, body{
    height: 100%;
    overflow: hidden;
}
body{
    margin: 0;
    padding: 28px 0 0 40px;
    background-color: #fff;
    font-family: "Open Sans", "Noto Sans", sans-serif;
    font-size: 10.8px;
    letter-spacing: -0.2px;
    color: #222;
}
ul{
    list-style: none;
    margin: 0;
    padding: 0;
}
i{
    display: block;
    font-style: normal;
}
.sheet{
    display: none;
}
.svg-t{
    font-family: "Open Sans", sans-serif;
    letter-spacing: 0;
}
.svg-serif{
    font-family: "Liberation Serif", serif;
}

/* the whole screenshot is a little soft */
.window{
    position: relative;
    width: 1493px;
    filter: blur(0.5px);
}
/* right edge of the window, stops where the status bar ends */
.window::after{
    content: "";
    position: absolute;
    right: 0;
    top: 3px;
    bottom: 4px;
    width: 1.5px;
    background-color: #555;
}

.titlebar{
    display: flex;
    align-items: center;
    height: 26px;
    padding-bottom: 2px;
    background-color: #fff;
}
.title-icon{
    width: 17px;
    height: 17px;
    margin: 0 5px 0 5px;
}
.title-text{
    font-size: 11px;
    letter-spacing: -0.25px;
    color: #333;
}
.win-controls{
    display: flex;
    margin-left: auto;
    margin-right: 2px;
}
.win-btn{
    display: flex;
    align-items: center;
    justify-content: center;
    width: 41px;
}
.win-btn svg{
    width: 11px;
    height: 11px;
}

.menubar{
    display: flex;
    align-items: center;
    height: 19px;
    background-color: #fff;
}
.menu-item{
    height: 19px;
    line-height: 18px;
    padding: 0 6.4px;
    border: 1px solid transparent;
    white-space: nowrap;
}
.menu-item:first-child{
    margin-left: -1px;
    padding-left: 7px;
}
.menu-item.active{
    background-color: #cde4f7;
    border-color: #a5cdf0;
    border-bottom: none;
}

.toolbar{
    display: flex;
    align-items: center;
    height: 32px;
    padding-top: 2px;
    background-color: #f0f0f0;
    border-bottom: 2px solid #d6d6d6;
}
.toolbar.short{
    height: 31px;
}
.ic{
    flex: none;
    width: 24px;
    height: 24px;
    margin: 0 2.3px;
}
.ic.off{
    opacity: .45;
    filter: grayscale(1);
}
.ic-on{
    display: flex;
    background-color: #d4e5f7;
    outline: 1px solid #9cc3e8;
    outline-offset: -1px;
}
.grip{
    flex: none;
    width: 8.7px;
    height: 24px;
    background: radial-gradient(circle, #c4c4c4 0.8px, transparent 1px) 2px 0 / 4px 3px repeat-y;
}
.grip.first{
    width: 7.7px;
    background-position: 1px 0;
}
.grip.tight{
    margin-right: -4px;
}
.sep{
    flex: none;
    width: 1px;
    height: 30px;
    margin-left: 3px;
    background-color: #dcdcdc;
}
.gap{
    flex: none;
}
.gap-r1{
    width: 170px;
}
.gap-r2a{
    width: 19px;
}
.gap-r2b{
    width: 604px;
}
.gap-r3{
    width: 366px;
}
.drop{
    flex: none;
    width: 0;
    height: 0;
    margin: 0 2.9px;
    border: 3.3px solid transparent;
    border-top: 4px solid #333;
    border-bottom: none;
}
.drop.off{
    border-top-color: #999;
}
.drop.small{
    margin: 0 2px;
}

.main{
    display: flex;
    height: 655px;
}
.docks{
    flex: none;
    display: flex;
    flex-direction: column;
    width: 372px;
    background-color: #f0f0f0;
}
.dock.browser{
    height: 310px;
}
.dock.layers{
    flex: 1;
    display: flex;
    flex-direction: column;
    margin-top: 5px;
}
.dock-title{
    display: flex;
    align-items: center;
    height: 23px;
    padding: 2px 1px 0 4px;
    background-color: #d9d9d9;
    border-bottom: 1px solid #c8c8c8;
    font-size: 10.4px;
    color: #333;
}
.browser .dock-title{
    padding-top: 4px;
}
.dock-title span{
    flex: 1;
}
.dock-btn{
    width: 14px;
    height: 14px;
    margin: 0 5px 0 0;
}
.dock-btn + .dock-btn{
    margin: 0 3px 0 0;
}
.dock-tools{
    display: flex;
    align-items: center;
    height: 27px;
    padding-left: 1px;
}
.layers .dock-tools{
    height: 26px;
}
.tool{
    flex: none;
    width: 16px;
    height: 16px;
    margin: 0 2.7px;
}

.tree{
    display: flex;
    height: 260px;
    background-color: #fff;
    border: 1px solid #a8a8a8;
    border-width: 1px 1px 1px 0;
}
.tree-rows{
    flex: 1;
    margin-top: -0.5px;
    overflow: hidden;
}
.tree-rows li{
    display: flex;
    align-items: center;
    height: 18.5px;
    white-space: nowrap;
}
.tree-rows li.child{
    padding-left: 39px;
}
.node{
    flex: none;
    width: 15px;
    height: 15px;
    margin-right: 6.5px;
}
.twisty{
    flex: none;
    width: 7px;
    height: 7px;
    margin: 0 9.5px 0 4px;
}
.twisty.shut{
    border-top: 1px solid #777;
    border-right: 1px solid #777;
    transform: rotate(45deg) scale(.85);
}
.twisty.open{
    border-bottom: 1.3px solid #444;
    border-right: 1.3px solid #444;
    transform: translateY(-2px) rotate(45deg);
}
.scrollbar{
    flex: none;
    display: flex;
    flex-direction: column;
    align-items: center;
    width: 15px;
    background-color: #f0f0f0;
    padding: 6px 0;
}
.sb-arrow{
    width: 6px;
    height: 6px;
    border-top: 1.2px solid #555;
    border-left: 1.2px solid #555;
}
.sb-arrow.up{
    transform: rotate(45deg);
}
.sb-arrow.down{
    transform: rotate(225deg);
}
.sb-track{
    flex: 1;
    width: 100%;
    padding-top: 3px;
}
.sb-thumb{
    width: 100%;
    height: 59px;
    background-color: #cdcdcd;
}

.layer-list{
    flex: 1;
    background-color: #fff;
    border: 1px solid #a8a8a8;
    border-width: 1px 1px 0 0;
    font-weight: 700;
    font-size: 10.8px;
    letter-spacing: 0;
}
.layer-list li{
    display: flex;
    align-items: center;
    height: 18.5px;
    padding-left: 22px;
    white-space: nowrap;
}
.layer-list li.current{
    background: linear-gradient(to right, #fff 20px, #e3effb 20px);
}
.cur-box{
    display: flex;
    align-items: center;
    flex: 1;
    height: 18.5px;
    padding-right: 2px;
    background-color: #cfe5fc;
    border: 1px dotted #333;
    margin-left: -1px;
}
.mem{
    width: 15px;
    height: 15px;
    margin-left: auto;
}
.check{
    flex: none;
    width: 12px;
    height: 12px;
    margin-right: 5px;
    background-color: #fff;
    border: 1px solid #7a7a7a;
    position: relative;
}
.check::after{
    content: "";
    position: absolute;
    left: 3px;
    top: 0;
    width: 4px;
    height: 8px;
    border-right: 1.2px solid #444;
    border-bottom: 1.2px solid #444;
    transform: rotate(40deg);
}
.swatch{
    flex: none;
    width: 14px;
    height: 15px;
    margin-right: 6px;
    border: 1px solid #888;
}
.swatch.study{
    background-color: #c1cf5f;
}
.swatch.merged{
    background-color: #935a9a;
}
.swatch.bg163{
    background-color: #9279b4;
}
.swatch.bg161{
    background-color: #dc7247;
}

.canvas{
    flex: 1;
    margin-left: 4px;
    margin-right: 1.5px;
    background-color: #fff;
    border-top: 1px solid #9a9a9a;
    border-left: 1px solid #9a9a9a;
}
#map{
    display: block;
    width: 100%;
    height: 100%;
}
.county{
    fill: #d06085;
}
.county-edge{
    fill: none;
    stroke: #5b4a52;
    stroke-width: 1;
}
.tracts path{
    fill: none;
    stroke: #3f2b36;
    stroke-width: 3;
}
#tracts-generated path{
    fill: none;
    stroke: #3f2b36;
    stroke-width: .95;
}
.study{
    fill: #c2d064;
    stroke: #7d9a3c;
    stroke-width: 1;
}

.statusbar{
    display: flex;
    align-items: center;
    height: 28px;
    background-color: #f0f0f0;
    border-top: 1px solid #a0a0a0;
    border-bottom: 2px solid #8c8c8c;
    font-size: 9.6px;
    letter-spacing: -0.1px;
}
.locator{
    display: flex;
    align-items: center;
    width: 185px;
    height: 18px;
    margin-left: 3px;
    background-color: #fff;
    border: 1px solid #a6a6a6;
    color: #777;
    font-size: 10.2px;
}
.loc-icon{
    width: 12px;
    height: 12px;
    margin: 0 6px 0 7px;
}
.st-label{
    flex: none;
    white-space: nowrap;
}
.l-coord{
    width: 50px;
    margin: 0 3px 0 575px;
}
.l-scale{
    width: 24px;
    margin: 0 3px 0 10px;
}
.l-mag{
    width: 42px;
    margin-right: 3px;
}
.l-rot{
    width: 40px;
    margin: 0 6px 0 9px;
}
.l-render{
    width: 34px;
}
.l-epsg{
    width: 49px;
}
.st-input{
    flex: none;
    position: relative;
    height: 19px;
    line-height: 17px;
    padding-left: 2px;
    background-color: #fff;
    border: 1px solid #8f8f8f;
    white-space: nowrap;
}
.w-coord{
    width: 80px;
}
.w-scale{
    width: 72px;
}
.w-mag{
    width: 74px;
}
.w-rot{
    width: 75px;
}
.combo{
    position: absolute;
    right: 6px;
    top: 4px;
    width: 6px;
    height: 6px;
    border-right: 1px solid #777;
    border-bottom: 1px solid #777;
    transform: rotate(45deg);
}
.spin{
    position: absolute;
    right: 1px;
    top: 1px;
    width: 11px;
    height: 15px;
    background-color: #e6e6e6;
    border: 1px solid #bbb;
}
.spin::after{
    content: "";
    position: absolute;
    left: 2px;
    top: 1px;
    border: 2.5px solid transparent;
    border-bottom: 3px solid #333;
    border-top: none;
    box-shadow: 0 7px 0 -1px #333;
}
.st-icon{
    flex: none;
    width: 16px;
    height: 16px;
    margin-left: 2px;
}
.st-lock{
    margin: 0 5px 0 7px;
}
.st-check{
    margin: 0 3px 0 6px;
}
.st-globe{
    margin: 0 4px 0 16px;
    width: 14px;
    height: 14px;
    filter: grayscale(1);
}
.st-msg{
    margin-left: 14px;
}
.behind{
    display: flex;
    height: 4px;
    overflow: hidden;
    font-size: 10.4px;
    line-height: 6px;
    color: #555;
}
.lix{
    margin-left: 30px;
}

.watermark{
    position: absolute;
    left: 1373px;
    top: 812px;
    width: 120px;
    overflow: hidden;
    white-space: nowrap;
    color: #8f8f8f;
    opacity: .6;
}
.wm-big{
    font-size: 17px;
    line-height: 22px;
    letter-spacing: 0;
}
.wm-small{
    margin: 2px 0 0 18px;
    font-size: 11px;
    opacity: .6;
}

.menu{
    position: absolute;
    padding: 2px 3px;
    background-color: #f0f0f0;
    border: 1px solid #d0d0d0;
    box-shadow: 3px 3px 3px rgba(0, 0, 0, .45);
}
.menu li{
    position: relative;
    display: flex;
    align-items: center;
    height: 20.4px;
    white-space: nowrap;
}
.menu .hot{
    background-color: #99c6f2;
}
.vector-menu{
    left: 265px;
    top: 45px;
    width: 191px;
    height: 127px;
}
.vector-menu li{
    padding-left: 28px;
}
.vector-menu .menu-ic{
    position: absolute;
    left: 1px;
    width: 16px;
    height: 16px;
}
.geo-menu{
    left: 451px;
    top: 66px;
    width: 213px;
    height: 188px;
}
.geo-menu li{
    height: 20.2px;
    padding-left: 28px;
}
.geo-menu .menu-ic{
    position: absolute;
    left: 1px;
    width: 16px;
    height: 16px;
}
.sub{
    position: absolute;
    right: 8px;
    top: 6px;
    border: 3.5px solid transparent;
    border-left: 4px solid #222;
    border-right: none;
}
```

FILE: map.js
```js
// census tracts in the urban east of the map: too many to type by hand,
// so cut blocks up by a seeded random, smaller where the city is denser
var seed = 1618;
function rnd() {
    seed = (seed * 16807) % 2147483647;
    return seed / 2147483647;
}

// [cx, cy, rx, ry, block size]
var blobs = [
    [1090, 410, 125, 26, 4.6],
    [1235, 408, 50, 28, 4.6],
    [1175, 455, 58, 42, 6],
    [1030, 480, 76, 52, 5.5],
    [1085, 500, 50, 30, 6],
    [1105, 565, 27, 42, 4.8],
    [1060, 525, 48, 26, 7],
    [935, 440, 30, 28, 9],
    [1000, 420, 55, 22, 6.5],
    [1090, 630, 22, 22, 9]
];

function blockSize(x, y) {
    var s = 30;
    blobs.forEach(function(b) {
        var u = Math.pow((x - b[0]) / b[2], 2) + Math.pow((y - b[1]) / b[3], 2);
        if (u < 1) s = Math.min(s, b[4]);
        else if (u < 2) s = Math.min(s, b[4] * 2.2);
    });
    return s;
}

// tracts north-east are turned with the shore
function inEast(x, y) {
    return x > 1125 && y < 510 - (x - 1125) * 0.35 && y > 395;
}

function cutBlocks(cx, cy, angle, keep) {
    var cos = Math.cos(angle), sin = Math.sin(angle);
    var d = [];

    function world(u, v) {
        return [cx + u * cos - v * sin, cy + u * sin + v * cos];
    }
    function line(u1, v1, u2, v2) {
        var a = world(u1, v1), b = world(u2, v2);
        var mid = [(a[0] + b[0]) / 2, (a[1] + b[1]) / 2];
        if (!keep(mid[0], mid[1]) || rnd() < 0.12) return;
        d.push("M" + a[0].toFixed(1) + " " + a[1].toFixed(1) + "L" + b[0].toFixed(1) + " " + b[1].toFixed(1));
    }
    function cut(u, v, w, h) {
        var c = world(u + w / 2, v + h / 2);
        var s = blockSize(c[0], c[1]);
        if (w < s && h < s) return;
        var t = 0.38 + rnd() * 0.24;
        if (w > h) {
            line(u + w * t, v, u + w * t, v + h);
            cut(u, v, w * t, h);
            cut(u + w * t, v, w * (1 - t), h);
        } else {
            line(u, v + h * t, u + w, v + h * t);
            cut(u, v, w, h * t);
            cut(u, v + h * t, w, h * (1 - t));
        }
    }

    cut(-240, -240, 480, 480);

    var path = document.createElementNS("http://www.w3.org/2000/svg", "path");
    path.setAttribute("d", d.join(""));
    document.getElementById("tracts-generated").appendChild(path);
}

cutBlocks(1110, 500, -0.059, function(x, y) {
    return x > 905 && y < 612 && !inEast(x, y);
});
cutBlocks(1190, 440, -0.62, inEast);
```
